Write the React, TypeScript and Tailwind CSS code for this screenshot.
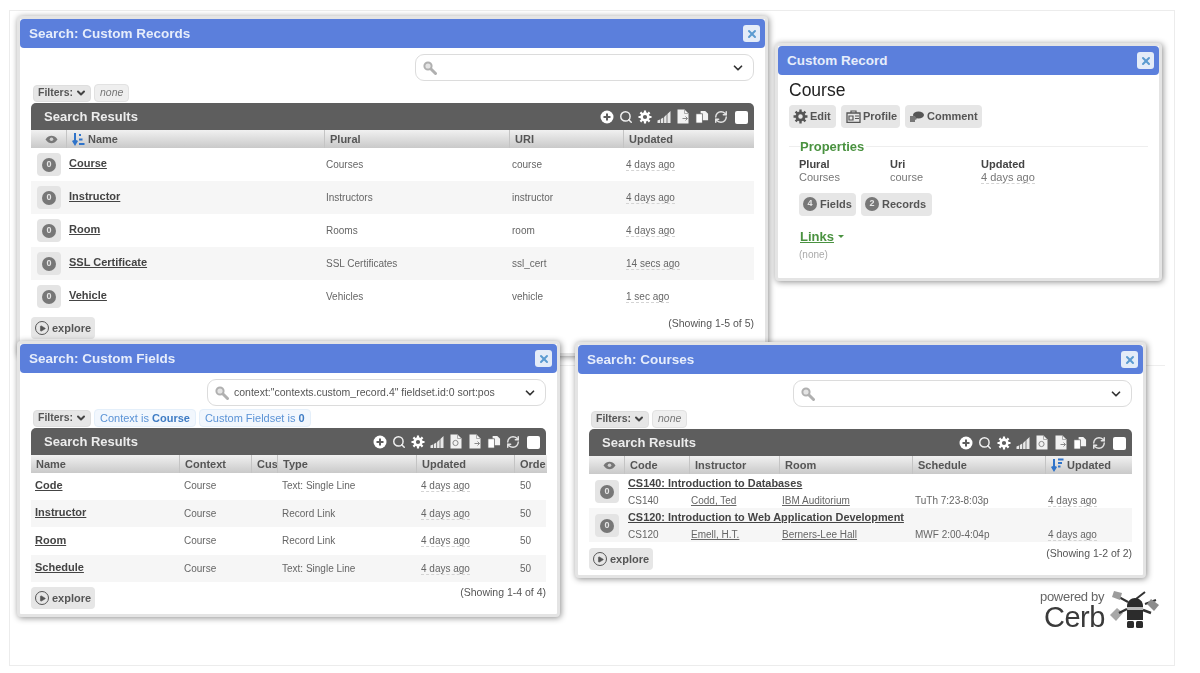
import { ReactNode } from 'react';
import { ChevronDown, X, Search, RefreshCw, Play } from 'lucide-react';

const FONT = "[font-family:'Liberation_Sans',Arial,sans-serif]";

function PlusIcon() {
  return (
    <svg width="14" height="14" viewBox="0 0 14 14">
      <circle cx="7" cy="7" r="6.5" fill="#fff" />
      <path d="M7 3.5v7M3.5 7h7" stroke="#5e5e5e" strokeWidth="2" />
    </svg>
  );
}

function GearIcon({ size = 14, color = '#fff' }: { size?: number; color?: string }) {
  return (
    <svg width={size} height={size} viewBox="0 0 14 14">
      <circle cx="7" cy="7" r="3.4" fill="none" stroke={color} strokeWidth="2.6" />
      <g stroke={color} strokeWidth="2.2">
        <path d="M7 0.5v2.5M7 11v2.5M0.5 7h2.5M11 7h2.5M2.4 2.4l1.8 1.8M9.8 9.8l1.8 1.8M2.4 11.6l1.8-1.8M9.8 4.2l1.8-1.8" />
      </g>
    </svg>
  );
}

function BarsIcon() {
  return (
    <svg width="14" height="14" viewBox="0 0 14 14">
      <path d="M0.5 13V10.5L3 9.5V13H3.8V9L6.3 7.5V13H7.1V7L9.6 4.5V13H10.4V4L13.5 1V13Z" fill="#e8e8e8" />
    </svg>
  );
}

function DocIcon({ arrow = false }: { arrow?: boolean }) {
  return (
    <svg width="14" height="15" viewBox="0 0 14 15">
      <path d="M1.5 0.5H8.5L12.5 4.5V14.5H1.5Z" fill="#f2f2f2" />
      <path d="M8.5 0.5V4.5H12.5" fill="none" stroke="#9a9a9a" strokeWidth="0.8" />
      {arrow ? (
        <circle cx="6.5" cy="9" r="2.6" fill="none" stroke="#8a8a8a" strokeWidth="1" />
      ) : (
        <path d="M6.5 9.5h5M9.5 7.5l2 2-2 2" fill="none" stroke="#8a8a8a" strokeWidth="1" />
      )}
    </svg>
  );
}

function CopyIcon() {
  return (
    <svg width="14" height="14" viewBox="0 0 15 14">
      <path d="M6 0.5H11L14 3.5V10.5H6Z" fill="#f2f2f2" />
      <path d="M1 3.5H8V13.5H1Z" fill="#fff" stroke="#5e5e5e" strokeWidth="0.8" />
    </svg>
  );
}

function EyeIcon() {
  return (
    <svg width="13" height="9" viewBox="0 0 13 9">
      <path d="M0.5 4.5C2.5 1.5 4.5 0.8 6.5 0.8S10.5 1.5 12.5 4.5C10.5 7.5 8.5 8.2 6.5 8.2S2.5 7.5 0.5 4.5Z" fill="#777" />
      <circle cx="6.5" cy="4.2" r="1.8" fill="#cfcfcf" />
    </svg>
  );
}

function SortIcon({ desc = false }: { desc?: boolean }) {
  return (
    <svg width="13" height="14" viewBox="0 0 13 14" className="shrink-0">
      <path d="M3 1v10M0.8 8.5L3 12l2.2-3.5" fill="none" stroke="#2f73c9" strokeWidth="2" />
      {desc ? (
        <path d="M7 1.5h5.5M7 5h4M7 8.5h2.5" stroke="#2f73c9" strokeWidth="2" />
      ) : (
        <path d="M7 3h2M7 7.5h3.5M7 12h5.5" stroke="#2f73c9" strokeWidth="2" />
      )}
    </svg>
  );
}

function Lens() {
  return (
    <svg width="14" height="14" viewBox="0 0 14 14" className="shrink-0">
      <circle cx="5" cy="5" r="3.6" fill="#e4e4e4" stroke="#b0b0b0" strokeWidth="2" />
      <path d="M8 8l4.5 4.5" stroke="#b0b0b0" strokeWidth="3" strokeLinecap="round" />
    </svg>
  );
}

function Robot() {
  return (
    <svg width="54" height="40" viewBox="0 0 54 40">
      <path d="M19 12L8 6M36 14L47 10M27 9L36 2" stroke="#333" strokeWidth="2" fill="none" />
      <path d="M5 1l8 2-2 7-8-3Z" fill="#9c9c9c" />
      <path d="M42 9l8 6-5 6-7-7Z" fill="#8c8c8c" />
      <path d="M1 25l7-7 6 5-7 8Z" fill="#a8a8a8" />
      <path d="M18 16c0-5 4-8 8-8s8 3 8 8v14H18Z" fill="#2c2c2c" />
      <rect x="18" y="17" width="16" height="3" fill="#bbb" />
      <path d="M10 23L18 19M34 20l8 3" stroke="#333" strokeWidth="2.5" />
      <rect x="18" y="31" width="7" height="7" rx="1.5" fill="#2c2c2c" />
      <rect x="27" y="31" width="7" height="7" rx="1.5" fill="#2c2c2c" />
    </svg>
  );
}

function Chip({ children, className = '' }: { children: ReactNode; className?: string }) {
  return (
    <span className={`flex items-center rounded-[4px] bg-[#e6e6e6] font-bold text-[#555] ${className}`}>
      {children}
    </span>
  );
}

function CountDot({ n }: { n: number }) {
  return (
    <span className="flex h-[14px] w-[14px] items-center justify-center rounded-full bg-[#777] text-[9px] font-bold text-[#e6e6e6]">
      {n}
    </span>
  );
}

function Badge() {
  return (
    <span className="flex h-[23px] w-[24px] items-center justify-center rounded-[4px] bg-[#e4e4e4]">
      <CountDot n={0} />
    </span>
  );
}

function CloseBtn() {
  return (
    <span className="flex h-[17px] w-[17px] items-center justify-center rounded-[3px] bg-[#e4ecf8]">
      <X size={12} strokeWidth={4} className="text-[#5b9bd0]" />
    </span>
  );
}

function Window({
  title,
  className,
  children,
}: {
  title: string;
  className: string;
  children: ReactNode;
}) {
  return (
    <div className={`absolute rounded-[4px] border-[3px] border-[#e4e4e4] bg-white shadow-[1px_1px_6px_rgba(0,0,0,0.45)] ${className}`}>
      <div className="flex h-[29px] items-center justify-between rounded-[4px] bg-[#5b7fdc] pl-[9px] pr-[5px] text-[13.5px] font-bold text-[#e6edfb]">
        <span className="mt-[2px]">{title}</span>
        <CloseBtn />
      </div>
      {children}
    </div>
  );
}

function SearchBox({ value, className = '' }: { value?: string; className?: string }) {
  return (
    <div className={`ml-auto flex h-[27px] w-[339px] items-center rounded-[9px] border border-[#dcdcdc] bg-white pl-[7px] pr-[8px] ${className}`}>
      <Lens />
      <span className="ml-[5px] flex-1 truncate text-[10.5px] text-[#555]">{value}</span>
      <ChevronDown size={14} strokeWidth={3} className="shrink-0 text-[#333]" />
    </div>
  );
}

function Filters({ children }: { children: ReactNode }) {
  return (
    <div className="flex h-[18px] items-center gap-[3px] pl-[2px] text-[10.5px]">
      <Chip className="h-[17px] gap-[2px] border border-[#dedede] pl-[4px] pr-[3px] text-[#555]">
        Filters:
        <ChevronDown size={12} strokeWidth={4} className="text-[#444]" />
      </Chip>
      {children}
    </div>
  );
}

function NoneFilter() {
  return (
    <span className="flex h-[18px] items-center rounded-[4px] border border-[#e2e2e2] bg-[#efefef] px-[5px] italic text-[#777]">
      none
    </span>
  );
}

function BlueFilter({ label, bold }: { label: string; bold: string }) {
  return (
    <span className="flex h-[18px] items-center rounded-[4px] border border-[#e4effa] bg-[#f2f7fd] px-[5px] text-[11px] text-[#5b93d6]">
      {label}&nbsp;<b className="text-[#3f7cc4]">{bold}</b>
    </span>
  );
}

function ResultsBar({ extraDoc = false }: { extraDoc?: boolean }) {
  return (
    <div className="flex h-[27px] items-center justify-between rounded-t-[5px] bg-[#5e5e5e] pl-[13px] pr-[6px] text-[13px] font-bold text-[#ececec]">
      <span>Search Results</span>
      <div className="flex items-center gap-[5px]">
        <PlusIcon />
        <Search size={14} strokeWidth={2.5} className="text-[#f0f0f0]" />
        <GearIcon />
        <BarsIcon />
        {extraDoc && <DocIcon arrow />}
        <DocIcon />
        <CopyIcon />
        <RefreshCw size={14} strokeWidth={2.5} className="text-[#e4e4e4]" />
        <span className="ml-[2px] mt-[2px] h-[13px] w-[13px] rounded-[2px] bg-white" />
      </div>
    </div>
  );
}

function ColHead({ children, className = '' }: { children?: ReactNode; className?: string }) {
  return (
    <div className={`flex h-[18px] items-center gap-[3px] overflow-hidden whitespace-nowrap border-r border-[#c4c4c4] bg-gradient-to-b from-[#f1f1f1] to-[#c9c9c9] pl-[5px] text-[11px] font-bold text-[#555] last:border-r-0 ${className}`}>
      {children}
    </div>
  );
}

function Explore() {
  return (
    <Chip className="h-[22px] w-fit gap-[3px] pl-[4px] pr-[4px] text-[11px]">
      <span className="flex h-[14px] w-[14px] items-center justify-center rounded-full border-[1.5px] border-[#555]">
        <Play size={7} fill="#555" className="text-[#555]" />
      </span>
      explore
    </Chip>
  );
}

function Ago({ children = '4 days ago' }: { children?: ReactNode }) {
  return <span className="border-b border-dashed border-[#d4d4d4] leading-[11px]">{children}</span>;
}

const records = [
  ['Course', 'Courses', 'course', '4 days ago'],
  ['Instructor', 'Instructors', 'instructor', '4 days ago'],
  ['Room', 'Rooms', 'room', '4 days ago'],
  ['SSL Certificate', 'SSL Certificates', 'ssl_cert', '14 secs ago'],
  ['Vehicle', 'Vehicles', 'vehicle', '1 sec ago'],
];

const fields = [
  ['Code', 'Text: Single Line'],
  ['Instructor', 'Record Link'],
  ['Room', 'Record Link'],
  ['Schedule', 'Text: Single Line'],
];

const courses = [
  ['CS140: Introduction to Databases', 'CS140', 'Codd, Ted', 'IBM Auditorium', 'TuTh 7:23-8:03p'],
  ['CS120: Introduction to Web Application Development', 'CS120', 'Emell, H.T.', 'Berners-Lee Hall', 'MWF 2:00-4:04p'],
];

function RecordsWindow() {
  const cols = 'grid grid-cols-[36px_258px_185px_114px_130px]';
  return (
    <Window title="Search: Custom Records" className="left-[17px] top-[16px] h-[340px] w-[751px]">
      <div className="px-[11px]">
        <SearchBox className="mt-[6px]" />
        <div className="mt-[3px]">
          <Filters><NoneFilter /></Filters>
        </div>
        <div className="mt-[1px]">
          <ResultsBar />
          <div className={cols}>
            <ColHead className="justify-center pl-0"><EyeIcon /></ColHead>
            <ColHead><SortIcon /> Name</ColHead>
            <ColHead>Plural</ColHead>
            <ColHead>URI</ColHead>
            <ColHead>Updated</ColHead>
          </div>
          {records.map((r, i) => (
            <div key={r[0]} className={`${cols} h-[33px] items-center text-[10px] text-[#666] ${i % 2 ? 'bg-[#f6f6f6]' : ''}`}>
              <div className="pl-[6px]"><Badge /></div>
              <a className="mb-[2px] pl-[2px] text-[11px] font-bold text-[#444] underline">{r[0]}</a>
              <span className="pl-[1px]">{r[1]}</span>
              <span className="pl-[2px]">{r[2]}</span>
              <span className="pl-[2px]"><Ago>{r[3]}</Ago></span>
            </div>
          ))}
        </div>
        <div className="mt-[4px] flex items-start justify-between">
          <Explore />
          <span className="-mt-[1px] text-[10.5px] text-[#555]">(Showing 1-5 of 5)</span>
        </div>
      </div>
    </Window>
  );
}

function FieldsWindow() {
  const cols = 'grid grid-cols-[149px_72px_26px_139px_98px_32px]';
  return (
    <Window title="Search: Custom Fields" className="left-[17px] top-[341px] h-[276px] w-[543px]">
      <div className="px-[11px]">
        <SearchBox value={'context:"contexts.custom_record.4" fieldset.id:0 sort:pos'} className="mt-[6px]" />
        <div className="mt-[3px]">
          <Filters>
            <BlueFilter label="Context is" bold="Course" />
            <BlueFilter label="Custom Fieldset is" bold="0" />
          </Filters>
        </div>
        <div className="mt-[1px]">
          <ResultsBar extraDoc />
          <div className={cols}>
            <ColHead>Name</ColHead>
            <ColHead>Context</ColHead>
            <ColHead>Cus</ColHead>
            <ColHead>Type</ColHead>
            <ColHead>Updated</ColHead>
            <ColHead>Orde</ColHead>
          </div>
          <div className="-mt-[1px]">
            {fields.map((f, i) => (
              <div key={f[0]} className={`${cols} h-[27.5px] items-center text-[10px] text-[#666] ${i % 2 ? 'bg-[#f6f6f6]' : ''}`}>
                <a className="mb-[2px] pl-[4px] text-[11px] font-bold text-[#444] underline">{f[0]}</a>
                <span className="pl-[4px]">Course</span>
                <span />
                <span className="pl-[4px]">{f[1]}</span>
                <span className="pl-[4px]"><Ago /></span>
                <span className="pl-[5px]">50</span>
              </div>
            ))}
          </div>
        </div>
        <div className="mt-[5px] flex items-start justify-between">
          <Explore />
          <span className="-mt-[2px] text-[10.5px] text-[#555]">(Showing 1-4 of 4)</span>
        </div>
      </div>
    </Window>
  );
}

function CoursesWindow() {
  const cols = 'grid grid-cols-[36px_65px_90px_133px_133px_86px]';
  return (
    <Window title="Search: Courses" className="left-[575px] top-[342px] h-[236px] w-[571px]">
      <div className="px-[11px]">
        <SearchBox className="mt-[6px]" />
        <div className="mt-[3px]">
          <Filters><NoneFilter /></Filters>
        </div>
        <div className="mt-[1px]">
          <ResultsBar extraDoc />
          <div className={cols}>
            <ColHead className="justify-center pl-0"><EyeIcon /></ColHead>
            <ColHead>Code</ColHead>
            <ColHead>Instructor</ColHead>
            <ColHead>Room</ColHead>
            <ColHead>Schedule</ColHead>
            <ColHead><SortIcon desc /> Updated</ColHead>
          </div>
          {courses.map((c, i) => (
            <div key={c[1]} className={`${cols} h-[34px] grid-rows-[18px_17px] items-center text-[10px] text-[#666] ${i % 2 ? 'bg-[#f6f6f6]' : ''}`}>
              <div className="row-span-2 pl-[6px]"><Badge /></div>
              <a className="col-span-5 pl-[3px] text-[10.9px] font-bold text-[#444] underline">{c[0]}</a>
              <span className="pl-[3px]">{c[1]}</span>
              <span className="pl-[1px] underline">{c[2]}</span>
              <span className="pl-[2px] underline">{c[3]}</span>
              <span className="pl-[2px]">{c[4]}</span>
              <span className="pl-[2px]"><Ago /></span>
            </div>
          ))}
        </div>
        <div className="mt-[6px] flex items-start justify-between">
          <Explore />
          <span className="-mt-[2px] text-[10.5px] text-[#555]">(Showing 1-2 of 2)</span>
        </div>
      </div>
    </Window>
  );
}

function RecordWindow() {
  return (
    <Window title="Custom Record" className="left-[775px] top-[43px] h-[238px] w-[387px]">
      <div className="px-[11px]">
        <h1 className="mt-[4px] text-[17.5px] font-medium leading-[22px] text-[#222]">Course</h1>
        <div className="mt-[4px] flex gap-[5px] text-[11px]">
          <Chip className="h-[23px] w-[47px] gap-[2px] pl-[4px]"><GearIcon size={15} color="#555" /> Edit</Chip>
          <Chip className="h-[23px] w-[59px] gap-[2px] pl-[5px]">
            <svg width="15" height="13" viewBox="0 0 15 13">
              <path d="M1 3h13v9.5H1Z" fill="none" stroke="#555" strokeWidth="1.3" />
              <path d="M5 3V1h5v2M3 6h4v4H3ZM9 6h4M9 8.5h4" fill="none" stroke="#555" strokeWidth="1.2" />
            </svg>
            Profile
          </Chip>
          <Chip className="h-[23px] w-[77px] gap-[3px] pl-[4px]">
            <svg width="15" height="11" viewBox="0 0 15 11">
              <ellipse cx="9.5" cy="4" rx="5.5" ry="3.5" fill="#555" />
              <path d="M1 5h5l2 3-2 1v2H1Z" fill="#777" />
            </svg>
            Comment
          </Chip>
        </div>
        <div className="mt-[9px] flex items-center">
          <span className="h-px w-[11px] bg-[#eeeeee]" />
          <span className="pr-[2px] text-[13px] font-bold text-[#4a9240]">Properties</span>
          <span className="h-px flex-1 bg-[#eeeeee]" />
        </div>
        <div className="mt-[1px] grid grid-cols-[91px_91px_1fr] pl-[10px] text-[11px] leading-[13px]">
          <b className="text-[#444]">Plural</b>
          <b className="text-[#444]">Uri</b>
          <b className="text-[#444]">Updated</b>
          <span className="text-[#777]">Courses</span>
          <span className="text-[#777]">course</span>
          <span className="text-[#777]"><Ago /></span>
        </div>
        <div className="mt-[9px] flex gap-[5px] pl-[10px] text-[11px]">
          <Chip className="h-[23px] w-[57px] gap-[3px] pl-[4px]"><CountDot n={4} /> Fields</Chip>
          <Chip className="h-[23px] w-[71px] gap-[3px] pl-[4px]"><CountDot n={2} /> Records</Chip>
        </div>
        <div className="mt-[11px] flex items-center gap-[4px] pl-[11px] text-[13px] font-bold text-[#4a9240]">
          <span className="underline">Links</span>
          <span className="h-0 w-0 border-x-[3px] border-t-[3px] border-x-transparent border-t-[#4a9240]" />
        </div>
        <div className="mt-[1px] pl-[10px] text-[10px] text-[#aaa]">(none)</div>
      </div>
    </Window>
  );
}

export default function App() {
  return (
    <div className={`h-[673px] w-[1200px] overflow-hidden bg-white ${FONT}`}>
      <div className="relative h-[673px] w-[1200px] blur-[0.6px]">
        <div className="absolute left-[9px] top-[10px] h-[656px] w-[1166px] border border-[#ececec]" />
        <div className="absolute left-[20px] top-[365px] h-px w-[1145px] bg-[#eeeeee]" />
        <RecordsWindow />
        <RecordWindow />
        <FieldsWindow />
        <CoursesWindow />
        <div className="absolute left-[1040px] top-[589px] flex items-start">
          <div className="mt-[1px] text-[#444]">
            <div className="text-[13px] leading-[14px] tracking-[-0.3px] text-[#666]">powered by</div>
            <div className="pl-[4px] text-[29px] leading-[27px] tracking-[-0.5px] text-[#3a3a3a]">Cerb</div>
          </div>
          <div className="ml-[4px] mt-[1px]"><Robot /></div>
        </div>
      </div>
    </div>
  );
}
